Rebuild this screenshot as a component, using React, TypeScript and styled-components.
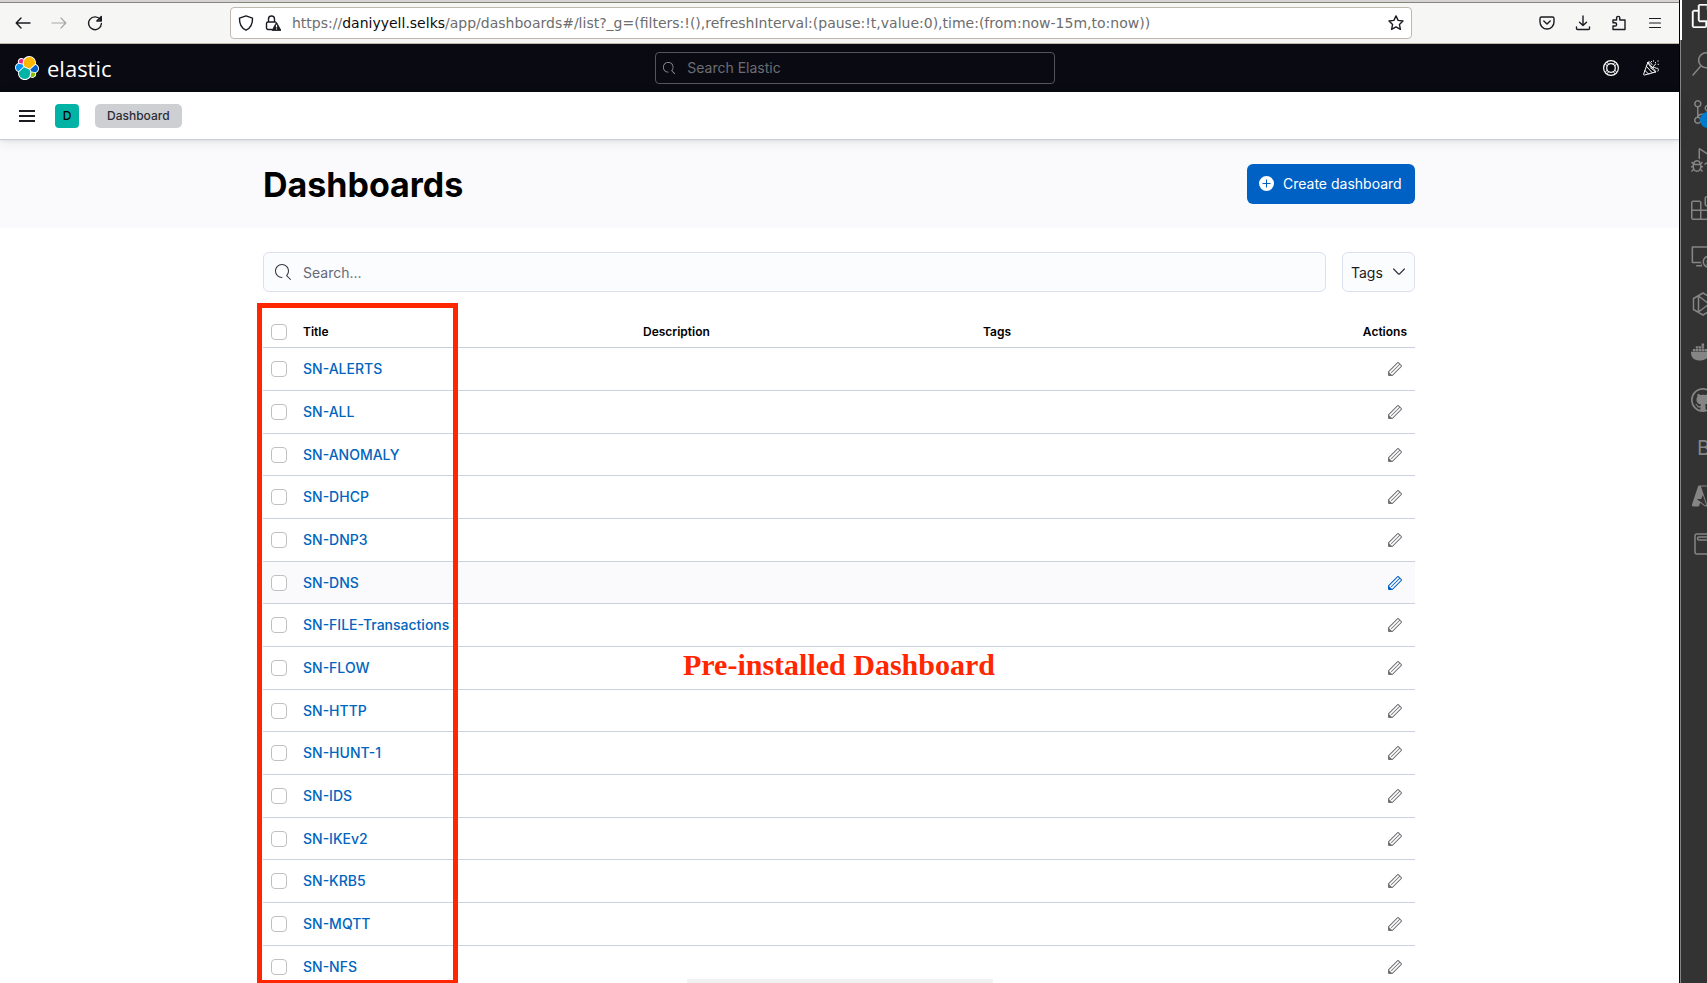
import React from "react";
import styled, { createGlobalStyle } from "styled-components";
import {
  VscFiles,
  VscSearch,
  VscSourceControl,
  VscDebugAlt,
  VscExtensions,
  VscRemoteExplorer,
  VscGithub,
  VscAzure,
} from "react-icons/vsc";
import { FaDocker } from "react-icons/fa";

const GlobalStyle = createGlobalStyle`
  *, *::before, *::after { box-sizing: border-box; }
  body {
    margin: 0;
    background: #fff;
    color: #1a1c21;
    font-family: Inter, "Liberation Sans", sans-serif;
    font-size: 14px;
    line-height: 20px;
  }
  button, input, select { font: inherit; color: inherit; }
`;

const Desktop = styled.div`
  display: flex;
  height: 100vh;
  overflow: hidden;
`;

const BrowserWindow = styled.div`
  flex: 1;
  min-width: 0;
  position: relative;
  display: flex;
  flex-direction: column;
`;

/* Browser chrome */

const TabStrip = styled.div`
  flex: none;
  height: 3px;
  background: #d6d4d2;
  border-bottom: 1px solid #86867f;
`;

const Toolbar = styled.div`
  flex: none;
  display: flex;
  align-items: center;
  height: 41px;
  padding: 0 16px 0 15px;
  background: #f6f6f4;
  border-bottom: 1px solid #bfb8b1;
`;

const ToolGroup = styled.div`
  display: flex;
  gap: 20px;
`;

const Spring = styled.div`
  flex: 0 1 127px;
`;

const IconButton = styled.button<{ $size?: number; $dim?: boolean }>`
  display: flex;
  align-items: center;
  justify-content: center;
  flex: none;
  width: ${(p) => p.$size ?? 16}px;
  height: ${(p) => p.$size ?? 16}px;
  padding: 0;
  border: 0;
  background: none;
  color: ${(p) => (p.$dim ? "#a8a8a7" : "#1c1b22")};
`;

const UrlBar = styled.div`
  flex: 1;
  min-width: 0;
  display: flex;
  align-items: center;
  gap: 11px;
  height: 32px;
  padding: 0 7px;
  background: #fff;
  border: 1px solid #bfb8b1;
  border-radius: 4px;
  color: #0c0c0d;
`;

const UrlText = styled.a`
  flex: 1;
  min-width: 0;
  overflow: hidden;
  white-space: nowrap;
  font-family: "DejaVu Sans", sans-serif;
  font-size: 14px;
  color: #6d6d6d;
  text-decoration: none;

  b {
    font-weight: 400;
    color: #0c0c0d;
  }
`;

/* Elastic header */

const GlobalHeader = styled.header`
  flex: none;
  display: flex;
  align-items: center;
  justify-content: space-between;
  height: 48px;
  padding: 0 8px 0 15px;
  background: #0a0b12;
`;

const Brand = styled.a`
  display: flex;
  align-items: center;
  gap: 8px;
  padding-right: 8px;
  color: #fff;
  text-decoration: none;
  font-family: "Open Sans", "Noto Sans", sans-serif;
  font-size: 22px;
  line-height: 24px;
`;

const HeaderSearch = styled.label`
  flex: 0 1 400px;
  display: flex;
  align-items: center;
  gap: 12px;
  height: 32px;
  padding: 0 7px;
  border: 1px solid #54555a;
  border-radius: 4px;
  color: #98999d;

  input {
    flex: 1;
    min-width: 0;
    padding: 0;
    border: 0;
    outline: 0;
    background: none;
  }
  input::placeholder { color: #6c6d72; opacity: 1; }
`;

const HeaderActions = styled.div`
  display: flex;

  button { color: #fff; }
`;

const CrumbBar = styled.nav`
  flex: none;
  position: relative;
  display: flex;
  align-items: center;
  height: 48px;
  padding: 0 15px;
  gap: 16px;
  background: #fff;
  border-bottom: 1px solid #c9ced8;
  box-shadow: 0 1px 3px rgba(0, 0, 0, 0.08), 0 3px 12px rgba(0, 0, 0, 0.07);
`;

const SpaceAvatar = styled.button`
  width: 24px;
  height: 24px;
  padding: 0;
  border: 0;
  border-radius: 4px;
  background: #00b3a4;
  color: #000;
  font-size: 12px;
  font-weight: 500;
`;

const Crumb = styled.a`
  height: 24px;
  padding: 0 12px;
  border-radius: 5px;
  background: #cecfd2;
  color: #2b2d38;
  font-size: 12px;
  font-weight: 500;
  line-height: 24px;
  text-decoration: none;
`;

/* Page */

const Container = styled.div`
  width: 100%;
  max-width: 1152px;
  margin: 0 auto;
`;

const PageHeader = styled.div`
  padding: 24px 1px 24px 0;
  background: #fafafd;
`;

const PageBody = styled.div`
  padding: 24px 1px 24px 0;
`;

const TitleRow = styled(Container)`
  display: flex;
  align-items: center;
  justify-content: space-between;
`;

const PageTitle = styled.h1`
  margin: 0;
  padding-top: 2px;
  color: #000;
  font-size: 34px;
  font-weight: 700;
  line-height: 38px;
`;

const CreateButton = styled.button`
  display: flex;
  align-items: center;
  gap: 8px;
  width: 168px;
  height: 40px;
  padding: 0 12px;
  border: 0;
  border-radius: 6px;
  background: #0061c5;
  color: #fff;
  white-space: nowrap;
`;

const FilterRow = styled.div`
  display: flex;
  gap: 16px;
  padding-bottom: 24px;
`;

const SearchBox = styled.label`
  flex: 1;
  display: flex;
  align-items: center;
  gap: 12px;
  height: 40px;
  padding: 0 11px;
  border: 1px solid #dbe0ee;
  border-radius: 6px;
  background: #fbfcfe;
  color: #343741;

  input {
    flex: 1;
    min-width: 0;
    padding: 1px 0 0;
    border: 0;
    outline: 0;
    background: none;
  }
  input::placeholder { color: #646a77; opacity: 1; }
`;

const TagFilter = styled.div`
  display: grid;
  grid-template-columns: 1fr 12px;
  align-items: center;
  width: 73px;
  height: 40px;
  padding-right: 9px;
  border: 1px solid #dbe0ee;
  border-radius: 6px;
  background: #fbfcfe;

  select {
    grid-area: 1 / 1 / 2 / 3;
    height: 38px;
    padding: 1px 8px 0;
    border: 0;
    background: none;
    appearance: none;
    color: #1a1c21;
  }
  svg {
    grid-area: 1 / 2;
    pointer-events: none;
  }
`;

const TableArea = styled.div`
  position: relative;
`;

const Table = styled.table`
  width: 100%;
  table-layout: fixed;
  border-collapse: separate;
  border-spacing: 0;
`;

const HeadCell = styled.th<{ $width?: number; $right?: boolean }>`
  width: ${(p) => (p.$width ? `${p.$width}px` : "auto")};
  height: 32px;
  padding: 0 8px;
  border-bottom: 1px solid #c9d0dd;
  color: #000;
  font-size: 12px;
  font-weight: 600;
  line-height: 16px;
  text-align: ${(p) => (p.$right ? "right" : "left")};
`;

const Row = styled.tr<{ $hovered?: boolean }>`
  height: 43px;
  background: ${(p) => (p.$hovered ? "#fafafd" : "#fff")};
  color: ${(p) => (p.$hovered ? "#0061c5" : "#707276")};

  &:nth-child(3n) { height: 42px; }
`;

const Cell = styled.td`
  padding: 0 8px;
  border-bottom: 1px solid #cbd1df;
  white-space: nowrap;

  button { margin-left: auto; margin-right: 4px; color: inherit; }
`;

const Check = styled.input`
  display: block;
  width: 16px;
  height: 16px;
  margin: 0;
  appearance: none;
  border: 1px solid #bfc0c3;
  border-radius: 4px;
  background: #fff;
`;

const DashboardLink = styled.a`
  color: #0065be;
  font-weight: 500;
  text-decoration: none;
`;

const Highlight = styled.div`
  position: absolute;
  left: -6px;
  top: -13px;
  width: 201px;
  height: 682px;
  border: 5px solid #ff2600;
`;

const Note = styled.p`
  position: absolute;
  left: 420px;
  top: 331px;
  margin: 0;
  color: #ff2600;
  font-family: "Liberation Serif", serif;
  font-size: 30px;
  font-weight: 700;
  line-height: 36px;
`;

/* Top edge of a panel that peeks in over the page */
const BottomPanel = styled.div`
  position: absolute;
  left: 0;
  right: 0;
  bottom: 0;
  width: 306px;
  height: 4px;
  margin: 0 auto;
  background: #f1f1f1;
  box-shadow: 0 -4px 8px -4px rgba(0, 0, 0, 0.08);
`;

/* Editor strip at the window edge */

const ActivityBar = styled.aside`
  flex: none;
  width: 28px;
  overflow: hidden;
  background: #333;
  border-left: 1px solid #000;
`;

const Activity = styled.button<{ $active?: boolean }>`
  position: relative;
  display: flex;
  align-items: center;
  width: 48px;
  height: 48px;
  padding: 0 0 0 10px;
  border: 0;
  background: none;
  color: ${(p) => (p.$active ? "#fff" : "#858585")};
  font-size: 24px;

  &:first-child { height: 40px; padding-bottom: 8px; }
  svg { flex: none; }
`;

const ActivityList = styled.div`
  min-height: 100%;
  border-left: 1px solid #858585;

  button:first-child {
    box-shadow: inset 1px 0 #fff, -1px 0 #fff;
  }
`;

const Badge = styled.span`
  position: absolute;
  left: 19px;
  top: 24px;
  width: 16px;
  height: 16px;
  border-radius: 8px;
  background: #007acc;
`;

const Letter = styled.span`
  padding-left: 6px;
  font-size: 20px;
`;

type StrokeProps = { d: string; size?: number; width?: number };

const Stroke = ({ d, size = 16, width = 1 }: StrokeProps) => (
  <svg
    width={size}
    height={size}
    viewBox="0 0 16 16"
    fill="none"
    stroke="currentColor"
    strokeWidth={width}
    strokeLinecap="round"
    strokeLinejoin="round"
    aria-hidden="true"
  >
    <path d={d} />
  </svg>
);

const ElasticLogo = () => (
  <svg width="24" height="24" viewBox="0 0 32 32" aria-hidden="true">
    <path fill="#fff" d="M32 16.77c0-2.68-1.66-5.03-4.16-5.95.11-.57.17-1.14.17-1.74C28.01 4.07 23.94 0 18.93 0c-2.93 0-5.66 1.41-7.37 3.77-.84-.65-1.87-1-2.95-1-2.66 0-4.83 2.16-4.83 4.83 0 .58.11 1.15.3 1.67C1.59 10.17 0 12.55 0 15.2c0 2.69 1.67 5.05 4.17 5.97-.11.56-.17 1.14-.17 1.74 0 5 4.07 9.07 9.07 9.07 2.94 0 5.66-1.41 7.37-3.78.84.66 1.88 1.02 2.96 1.02 2.66 0 4.83-2.16 4.83-4.83 0-.58-.11-1.15-.3-1.67 2.45-.9 4.07-3.28 4.07-5.95" />
    <path fill="#FEB800" d="M12.58 13.787l7.002 3.211 7.066-6.213a7.85 7.85 0 00.152-1.557c0-4.287-3.476-7.775-7.749-7.775a7.74 7.74 0 00-6.397 3.4l-1.176 6.118 1.102 2.816z" />
    <path fill="#00B3A4" d="M5.333 21.215a7.971 7.971 0 00-.151 1.577c0 4.301 3.486 7.8 7.77 7.8a7.758 7.758 0 006.422-3.418l1.166-6.1-1.556-2.987-7.03-3.215-6.621 6.343z" />
    <path fill="#F0278C" d="M5.288 9.067l4.8 1.137L11.14 4.72a3.785 3.785 0 00-2.306-.79c-2.096 0-3.8 1.71-3.8 3.815 0 .465.08.921.254 1.322" />
    <path fill="#0B94F0" d="M4.872 10.214c-2.144.712-3.643 2.777-3.643 5.053 0 2.213 1.363 4.19 3.409 4.974l6.735-6.112-1.237-2.652z" />
    <path fill="#82BD00" d="M20.873 27.174a3.769 3.769 0 002.285.776 3.8 3.8 0 003.549-5.12l-4.775-1.12z" />
    <path fill="#0062C8" d="M21.848 20.563l5.279 1.236c2.145-.712 3.644-2.777 3.644-5.054a5.34 5.34 0 00-3.419-4.964l-6.906 6.074z" />
  </svg>
);

const SearchIcon = ({ size = 16 }: { size?: number }) => (
  <svg width={size} height={size} viewBox="0 0 16 16" fill="currentColor" aria-hidden="true">
    <path d="M11.271 11.978l3.872 3.873a.502.502 0 00.708 0 .502.502 0 000-.708l-3.565-3.564c2.38-2.747 2.267-6.923-.342-9.532-2.73-2.73-7.17-2.73-9.898 0-2.728 2.729-2.728 7.17 0 9.9a6.955 6.955 0 004.949 2.05.5.5 0 000-1 5.96 5.96 0 01-4.242-1.757 6.01 6.01 0 010-8.486 6.004 6.004 0 018.484 0 6.01 6.01 0 010 8.486.5.5 0 00.034.738z" />
  </svg>
);

const PencilIcon = () => (
  <svg width="16" height="16" viewBox="0 0 16 16" fill="currentColor" aria-hidden="true">
    <path d="M12.148 3.148L11 2l-9 9v3h3l9-9-1.144-1.144-8.002 7.998a.502.502 0 01-.708 0 .502.502 0 010-.708l8.002-7.998zM11 1c.256 0 .512.098.707.293l3 3a.999.999 0 010 1.414l-9 9A.997.997 0 015 15H2a1 1 0 01-1-1v-3c0-.265.105-.52.293-.707l9-9A.997.997 0 0111 1zM5 14H2v-3l3 3z" />
  </svg>
);

const LockIcon = () => (
  <svg width="16" height="16" viewBox="0 0 16 16" fill="none" aria-hidden="true">
    <path d="M6.5 14.5H3a1.5 1.5 0 01-1.5-1.5V8.500A1.500 1.500 0 013 7h7.500M3.500 7V4a3 3 0 016 0v3" stroke="currentColor" strokeWidth="1.4" strokeLinecap="round" />
    <path d="M11.5 7.300L16 15.500H7z" fill="currentColor" stroke="currentColor" strokeLinejoin="round" strokeWidth=".8" />
    <path d="M11.5 9.800v2.700M11.500 13.600v1" stroke="#fff" strokeWidth="1.2" />
  </svg>
);

const LifebuoyIcon = () => (
  <svg width="16" height="16" viewBox="0 0 16 16" fill="none" stroke="currentColor" aria-hidden="true">
    <circle cx="8" cy="8" r="7.4" strokeWidth="1.2" />
    <circle cx="8" cy="8" r="4.3" strokeWidth="1.2" />
    <path d="M4.100 2.300l1.900 2.400M2.300 4.100l2.400 1.900M11.900 2.300L10 4.700M13.700 4.100L11.300 6M4.100 13.700L6 11.300M2.300 11.900L4.700 10M11.900 13.700L10 11.300M13.700 11.900L11.300 10" />
  </svg>
);

const CheerIcon = () => (
  <svg width="16" height="16" viewBox="0 0 16 16" fill="none" stroke="currentColor" strokeLinecap="round" strokeLinejoin="round" aria-hidden="true">
    <path d="M4.800 2.500L.6 14.200a.6.6 0 00.8.8L12.600 12zM4.800 2.500C5.500 1 7.600 2 9 4.500M4.800 2.500c2.400 4.500 4.800 7.500 7.800 9.500M3.500 6.500l5.800 6.300M2 10.500l3.600 3.600M8 8.500c1-1.500 3-1.500 4.500-.8M10 6.800l2.500-2.600M13 8.500c2-1.500 3 1 2 2.600" />
    <path d="M10.500.8v.4M12.500 2.500v.4M15 .8v.4M15.200 4.200v.4M8.500 1.500v.2" />
  </svg>
);

const HexIcon = () => (
  <svg width="24" height="24" viewBox="0 0 24 24" fill="none" stroke="currentColor" strokeWidth="1.5" strokeLinejoin="round" aria-hidden="true">
    <path d="M12 1l9.500 5.500v11L12 23l-9.500-5.500v-11zM7.500 4v16M7.500 4l12 9M7.500 20l12-9" />
  </svg>
);

const BoxIcon = () => (
  <svg width="24" height="24" viewBox="0 0 24 24" fill="none" stroke="currentColor" strokeWidth="1.5" aria-hidden="true">
    <rect x="4" y="2" width="20" height="20" rx="2" />
    <path d="M24 5H8a1.500 1.500 0 000 3h16" />
  </svg>
);

const PUZZLE = "M2 14.500v-3.500h2a1.500 1.500 0 000-3.200H2V5h3.600V3a1.600 1.600 0 013.200 0v2H14v9.500z";
const SHIELD = "M8 .9l6.500 2.300c.2 5-1.500 9.600-6.500 12C3 12.800 1.300 8.200 1.500 3.200z";
const STAR = "M8 .9l2.100 4.500 4.900.6-3.600 3.400 1 4.900L8 11.900l-4.400 2.400 1-4.900L1 6l4.900-.6z";

const dashboards = [
  "SN-ALERTS",
  "SN-ALL",
  "SN-ANOMALY",
  "SN-DHCP",
  "SN-DNP3",
  "SN-DNS",
  "SN-FILE-Transactions",
  "SN-FLOW",
  "SN-HTTP",
  "SN-HUNT-1",
  "SN-IDS",
  "SN-IKEv2",
  "SN-KRB5",
  "SN-MQTT",
  "SN-NFS",
];

const activities: { label: string; icon: React.ReactNode }[] = [
  { label: "Explorer", icon: <VscFiles stroke="currentColor" strokeWidth=".4" /> },
  { label: "Search", icon: <VscSearch /> },
  { label: "Source control", icon: <><VscSourceControl /><Badge /></> },
  { label: "Run and debug", icon: <VscDebugAlt /> },
  { label: "Extensions", icon: <VscExtensions /> },
  { label: "Remote explorer", icon: <VscRemoteExplorer /> },
  { label: "Clusters", icon: <HexIcon /> },
  { label: "Docker", icon: <FaDocker /> },
  { label: "GitHub", icon: <VscGithub /> },
  { label: "Blackbox", icon: <Letter>B</Letter> },
  { label: "Azure", icon: <VscAzure /> },
  { label: "Projects", icon: <BoxIcon /> },
];

export default function App() {
  return (
    <>
      <GlobalStyle />
      <Desktop>
        <BrowserWindow>
          <TabStrip />
          <Toolbar>
            <ToolGroup>
              <IconButton aria-label="Back"><Stroke width={1.4} d="M15 8H1.500M6 3L1.200 8 6 13" /></IconButton>
              <IconButton aria-label="Forward" $dim><Stroke width={1.2} d="M1 8h13.500M10 3l4.800 5-4.800 5" /></IconButton>
              <IconButton aria-label="Reload"><Stroke width={1.4} d="M13.200 4.500A6.400 6.400 0 1014.400 8.500M14.300 1.500v4.500h-4.500z" /></IconButton>
            </ToolGroup>
            <Spring />
            <UrlBar>
              <IconButton aria-label="Tracking protection"><Stroke width={1.4} d={SHIELD} /></IconButton>
              <IconButton aria-label="Connection not secure"><LockIcon /></IconButton>
              <UrlText href="#/list">
                https://<b>daniyyell.selks</b>/app/dashboards#/list?_g=(filters:!(),refreshInterval:(pause:!t,value:0),time:(from:now-15m,to:now))
              </UrlText>
              <IconButton aria-label="Bookmark"><Stroke width={1.4} d={STAR} /></IconButton>
            </UrlBar>
            <Spring />
            <ToolGroup>
              <IconButton aria-label="Save to Pocket"><Stroke width={1.4} d="M2.500 2h11A1.500 1.500 0 0115 3.500V7A7 7 0 011 7V3.500A1.500 1.500 0 012.500 2zM4.800 6L8 9l3.200-3" /></IconButton>
              <IconButton aria-label="Downloads"><Stroke width={1.4} d="M8 1v9.500M4.500 7.200L8 10.500l3.500-3.300M1.500 12v1.500a1 1 0 001 1h11a1 1 0 001-1V12" /></IconButton>
              <IconButton aria-label="Extensions"><Stroke width={1.4} d={PUZZLE} /></IconButton>
              <IconButton aria-label="Menu"><Stroke width={1.2} d="M2.500 3.500h11M2.500 8h11M2.500 12.500h11" /></IconButton>
            </ToolGroup>
          </Toolbar>

          <GlobalHeader>
            <Brand href="#/home"><ElasticLogo />elastic</Brand>
            <HeaderSearch>
              <SearchIcon size={12} />
              <input type="search" placeholder="Search Elastic" aria-label="Search Elastic" />
            </HeaderSearch>
            <HeaderActions>
              <IconButton $size={40} aria-label="Help"><LifebuoyIcon /></IconButton>
              <IconButton $size={40} aria-label="What's new"><CheerIcon /></IconButton>
            </HeaderActions>
          </GlobalHeader>

          <CrumbBar aria-label="Breadcrumbs">
            <IconButton $size={24} aria-label="Toggle navigation">
              <svg width="16" height="16" viewBox="0 0 16 16" fill="currentColor" aria-hidden="true">
                <path d="M0 2h16v2H0zM0 7h16v2H0zM0 12h16v2H0z" />
              </svg>
            </IconButton>
            <SpaceAvatar aria-label="Default space">D</SpaceAvatar>
            <Crumb href="#/list" aria-current="page">Dashboard</Crumb>
          </CrumbBar>

          <main>
            <PageHeader>
              <TitleRow>
                <PageTitle>Dashboards</PageTitle>
                <CreateButton>
                  <svg width="16" height="16" viewBox="0 0 16 16" aria-hidden="true">
                    <circle cx="7.5" cy="7.5" r="7.5" fill="#fff" />
                    <path d="M7.500 3.500v8M3.500 7.500h8" stroke="#0061c5" />
                  </svg>
                  Create dashboard
                </CreateButton>
              </TitleRow>
            </PageHeader>
            <PageBody>
              <Container>
                <FilterRow>
                  <SearchBox>
                    <SearchIcon />
                    <input type="search" placeholder="Search..." aria-label="Search dashboards" />
                  </SearchBox>
                  <TagFilter>
                    <select aria-label="Tags"><option>Tags</option></select>
                    <svg width="12" height="12" viewBox="0 0 12 12" fill="none" stroke="#343741" strokeWidth="1.2" strokeLinecap="round" aria-hidden="true">
                      <path d="M.6 3L5.500 8a.7.7 0 001 0l4.900-5" />
                    </svg>
                  </TagFilter>
                </FilterRow>
                <TableArea>
                  <Table>
                    <thead>
                      <tr>
                        <HeadCell $width={32}><Check type="checkbox" aria-label="Select all rows" /></HeadCell>
                        <HeadCell>Title</HeadCell>
                        <HeadCell>Description</HeadCell>
                        <HeadCell>Tags</HeadCell>
                        <HeadCell $width={100} $right>Actions</HeadCell>
                      </tr>
                    </thead>
                    <tbody>
                      {dashboards.map((name) => (
                        <Row key={name} $hovered={name === "SN-DNS"}>
                          <Cell><Check type="checkbox" aria-label={`Select ${name}`} /></Cell>
                          <Cell><DashboardLink href={`#/view/${name}`}>{name}</DashboardLink></Cell>
                          <Cell />
                          <Cell />
                          <Cell><IconButton aria-label={`Edit ${name}`}><PencilIcon /></IconButton></Cell>
                        </Row>
                      ))}
                    </tbody>
                  </Table>
                  <Highlight />
                  <Note>Pre-installed Dashboard</Note>
                </TableArea>
              </Container>
            </PageBody>
          </main>
          <BottomPanel />
        </BrowserWindow>

        <ActivityBar>
          <ActivityList>
            {activities.map((a, i) => (
              <Activity key={a.label} aria-label={a.label} $active={i === 0}>{a.icon}</Activity>
            ))}
          </ActivityList>
        </ActivityBar>
      </Desktop>
    </>
  );
}
